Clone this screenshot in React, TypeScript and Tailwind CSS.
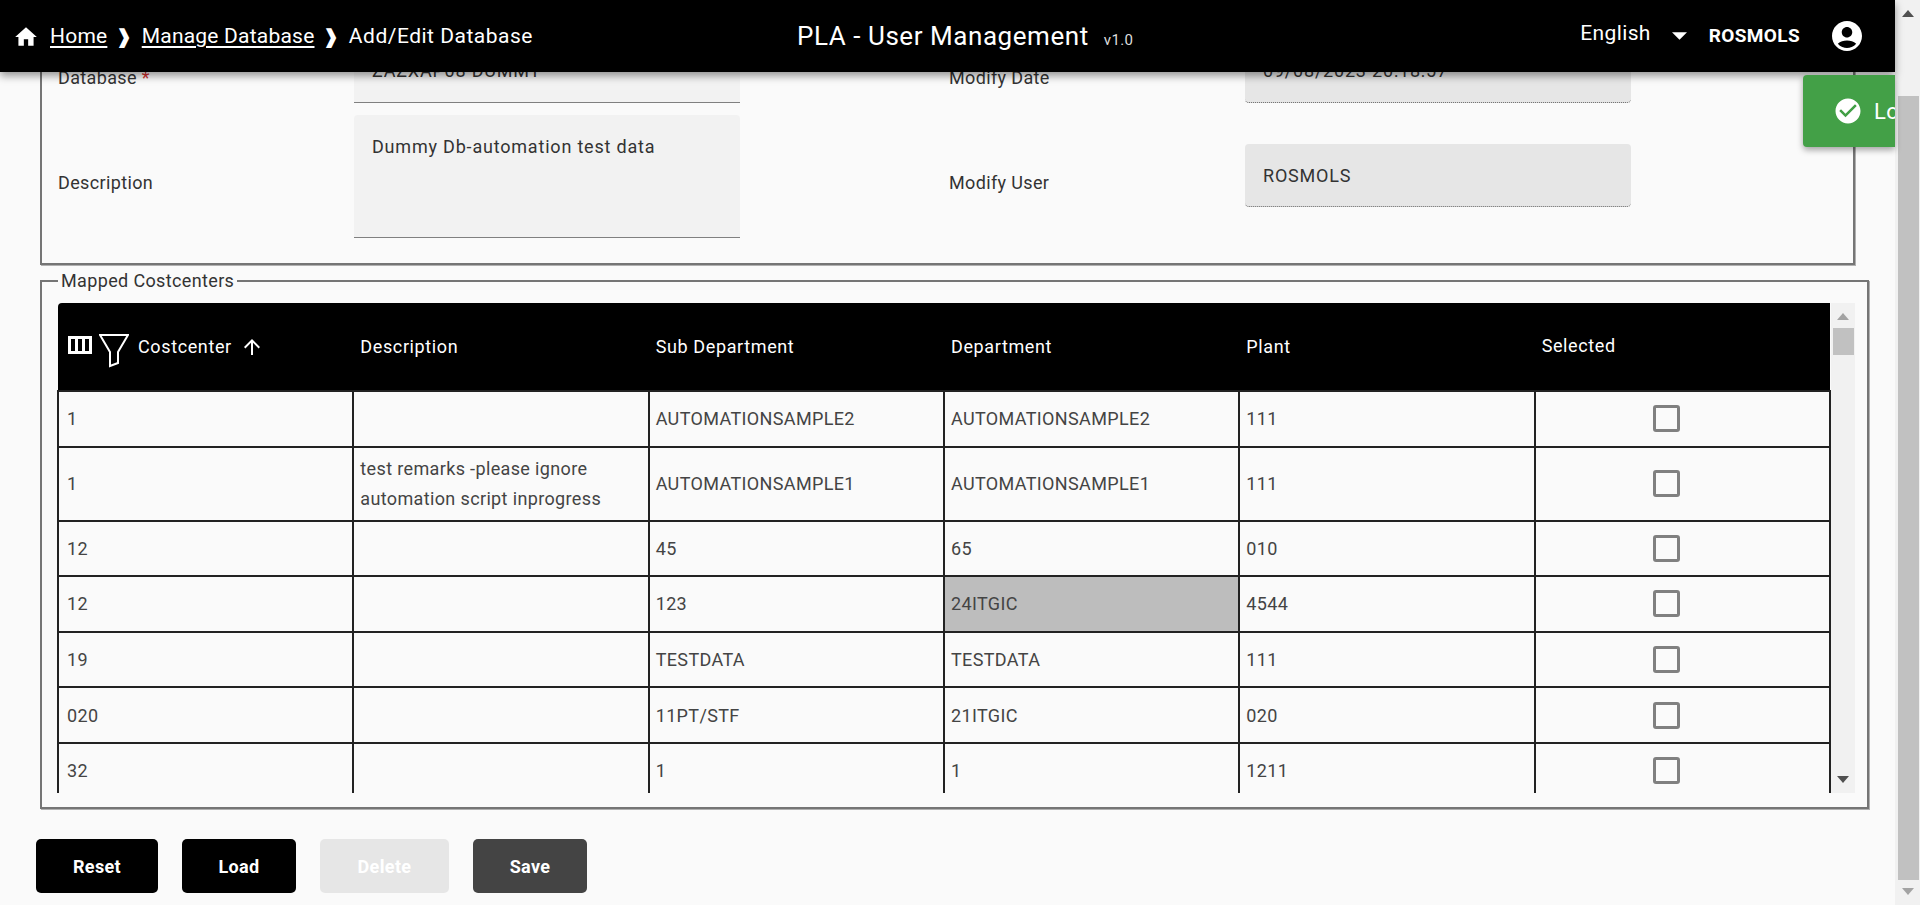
type Row = {
  code: string;
  description?: string[];
  sub: string;
  dept: string;
  plant: string;
  highlight?: boolean;
  tall?: boolean;
};

const rows: Row[] = [
  { code: "1", sub: "AUTOMATIONSAMPLE2", dept: "AUTOMATIONSAMPLE2", plant: "111" },
  {
    code: "1",
    description: ["test remarks -please ignore", "automation script inprogress"],
    sub: "AUTOMATIONSAMPLE1",
    dept: "AUTOMATIONSAMPLE1",
    plant: "111",
    tall: true,
  },
  { code: "12", sub: "45", dept: "65", plant: "010" },
  { code: "12", sub: "123", dept: "24ITGIC", plant: "4544", highlight: true },
  { code: "19", sub: "TESTDATA", dept: "TESTDATA", plant: "111" },
  { code: "020", sub: "11PT/STF", dept: "21ITGIC", plant: "020" },
  { code: "32", sub: "1", dept: "1", plant: "1211" },
];

const Arrow = ({ up, className }: { up?: boolean; className: string }) => (
  <svg width="12" height="7" viewBox="0 0 12 7" className={className}>
    <path d={up ? "M0 7 L6 0 L12 7 Z" : "M0 0 L12 0 L6 7 Z"} fill="currentColor" />
  </svg>
);

const Cell = ({ children, className = "" }: { children?: React.ReactNode; className?: string }) => (
  <td className={`border-2 border-[#222] px-[6px] py-0 align-middle text-[#444] ${className}`}>{children}</td>
);

const App = () => {
  return (
    <div className="flex h-[905px] w-full overflow-hidden bg-[#fafafa] text-[18px] tracking-[0.02em] text-[#333] [font-family:Roboto,sans-serif]">
      <div className="relative flex min-w-0 flex-1 flex-col">
        <header className="relative z-10 flex h-[72px] shrink-0 items-center bg-black pl-[14px] pr-[30px] text-white shadow-[0_4px_8px_rgba(0,0,0,0.4)]">
          <div className="flex w-[783px] items-center pt-[2px] text-[21px]">
            <svg width="26" height="26" viewBox="0 0 24 24" fill="currentColor" className="mr-[11px] -ml-px">
              <path d="M10 20v-6h4v6h5v-8h3L12 3 2 12h3v8z" />
            </svg>
            <span className="tracking-[0.01em] underline underline-offset-[3px]">Home</span>
            <span className="mx-[9px] text-[19px] font-bold">❱</span>
            <span className="tracking-[0.01em] underline underline-offset-[3px]">Manage Database</span>
            <span className="mx-[9px] text-[19px] font-bold">❱</span>
            <span className="tracking-[0.5px]">Add/Edit Database</span>
          </div>
          <div className="flex flex-1 items-baseline">
            <span className="text-[26px] tracking-[0.55px]">PLA - User Management</span>
            <span className="ml-[15px] text-[15px] text-[#ddd]">v1.0</span>
          </div>
          <div className="flex items-center">
            <span className="-mt-[4px] text-[21px]">English</span>
            <svg width="15" height="8" viewBox="0 0 16 8" className="ml-[21px]">
              <path d="M0 0 L16 0 L8 8 Z" fill="white" />
            </svg>
            <span className="ml-[22px] text-[19px] font-bold">ROSMOLS</span>
            <svg width="36" height="36" viewBox="0 0 24 24" fill="white" className="ml-[29px]">
              <path d="M12 2C6.48 2 2 6.48 2 12s4.48 10 10 10 10-4.48 10-10S17.52 2 12 2zm0 4c1.93 0 3.5 1.57 3.5 3.5S13.93 13 12 13s-3.5-1.57-3.5-3.5S10.07 6 12 6zm0 14c-2.03 0-4.43-.82-6.14-2.88C7.55 15.8 9.68 15 12 15s4.45.8 6.14 2.12C16.43 19.18 14.03 20 12 20z" />
            </svg>
          </div>
        </header>

        <div className="absolute right-0 top-[75px] z-20 flex h-[72px] w-[92px] items-center overflow-hidden rounded-l-[4px] bg-[#43a047] pl-[30px] text-white shadow-[0_3px_6px_rgba(0,0,0,0.35)]">
          <svg width="30" height="30" viewBox="0 0 24 24" fill="white" className="shrink-0">
            <path d="M12 2C6.48 2 2 6.48 2 12s4.48 10 10 10 10-4.48 10-10S17.52 2 12 2zm-2 15l-5-5 1.41-1.41L10 14.17l7.59-7.59L19 8l-9 9z" />
          </svg>
          <span className="ml-[11px] whitespace-nowrap text-[22px]">Lo</span>
        </div>

        <main className="flex flex-1 flex-col pl-[40px] pr-[26px]">
          <section className="-mt-[34px] mr-[14px] h-[227px] shrink-0 border-2 border-[#757575] pl-[16px] pr-[222px] shadow-[1px_1px_0_#b0b0b0]">
            <div className="grid grid-cols-[1fr_1fr]">
              <div className="flex flex-col">
                <div className="flex h-[62px] items-center">
                  <span className="w-[296px] pt-[12px]">
                    Database <span className="text-[#d32f2f]">*</span>
                  </span>
                  <div className="flex h-[63px] w-[386px] items-start border-b border-[#808080] bg-[#f2f2f2] px-[18px] pt-[17px] tracking-[0.8px]">
                    ZAZXAP08 DUMMY
                  </div>
                </div>
                <div className="mt-[13px] flex h-[123px] items-center">
                  <span className="w-[296px] pt-[12px]">Description</span>
                  <div className="h-full w-[386px] rounded-t-[4px] border-b border-[#808080] bg-[#f2f2f2] px-[18px] pt-[18px] tracking-[0.8px]">
                    Dummy Db-automation test data
                  </div>
                </div>
              </div>
              <div className="flex flex-col pl-[205px]">
                <div className="flex h-[62px] items-center">
                  <span className="w-[296px] pt-[12px]">Modify Date</span>
                  <div className="flex h-[63px] w-[386px] items-start rounded-b-[4px] border-b border-dotted border-[#666] bg-[#e6e6e6] px-[18px] pt-[17px] tracking-[0.8px]">
                    09/08/2023 20:18:57
                  </div>
                </div>
                <div className="mt-[42px] flex h-[63px] items-center">
                  <span className="w-[296px] pt-[13px]">Modify User</span>
                  <div className="flex h-full w-[386px] items-center rounded-[4px] border-b border-dotted border-[#666] bg-[#e6e6e6] px-[18px] tracking-[0.8px]">
                    ROSMOLS
                  </div>
                </div>
              </div>
            </div>
          </section>

          <fieldset className="mt-[8px] h-[536px] shrink-0 border-2 border-[#757575] pl-[15px] pr-[12px] pt-[14px] shadow-[1px_1px_0_#b0b0b0]">
            <legend className="ml-[1px] px-[3px] text-[18px] leading-[16px]">Mapped Costcenters</legend>
            <div className="flex h-[490px]">
              <div className="h-full min-w-0 flex-1 overflow-hidden">
                <table className="w-full table-fixed border-collapse">
                  <thead>
                    <tr className="h-[88px] border-b-2 border-b-white bg-black text-left tracking-[0.62px] text-white">
                      <th className="rounded-tl-[4px] pl-[10px] font-normal">
                        <div className="flex items-center">
                          <svg width="24" height="18" viewBox="0 0 24 18" className="-mt-[4px]">
                            <path d="M1.5 1.5h21v15h-21z M8.5 1.5v15 M15.5 1.5v15" fill="none" stroke="white" strokeWidth="3" />
                          </svg>
                          <svg width="30" height="34" viewBox="0 0 30 34" className="ml-[7px] mt-[8px]">
                            <path d="M1 1h28L19 18v11l-8 3V18z" fill="none" stroke="white" strokeWidth="2" />
                          </svg>
                          <span className="ml-[9px]">Costcenter</span>
                          <svg width="24" height="24" viewBox="0 0 24 24" fill="white" className="ml-[8px]">
                            <path d="M4 12l1.41 1.41L11 7.83V20h2V7.83l5.58 5.59L20 12l-8-8-8 8z" />
                          </svg>
                        </div>
                      </th>
                      <th className="pl-[7px] font-normal">Description</th>
                      <th className="pl-[7px] font-normal">Sub Department</th>
                      <th className="pl-[7px] font-normal">Department</th>
                      <th className="pl-[7px] font-normal">Plant</th>
                      <th className="pb-[2px] pl-[7px] font-normal">Selected</th>
                    </tr>
                  </thead>
                  <tbody>
                    {rows.map((row, i) => (
                      <tr key={i} className={row.tall ? "h-[74px]" : "h-[55.6px]"}>
                        <Cell className="pl-[8px]">{row.code}</Cell>
                        <Cell>
                          {row.description?.map((line) => (
                            <div key={line} className="leading-[30px]">
                              {line}
                            </div>
                          ))}
                        </Cell>
                        <Cell>{row.sub}</Cell>
                        <Cell className={row.highlight ? "bg-[#bdbdbd]" : ""}>{row.dept}</Cell>
                        <Cell>{row.plant}</Cell>
                        <Cell>
                          <div className="ml-[111px] h-[27px] w-[27px] rounded-[3px] border-[3px] border-[#808080]" />
                        </Cell>
                      </tr>
                    ))}
                  </tbody>
                </table>
              </div>
              <div className="flex w-[24px] shrink-0 flex-col items-center justify-between bg-[#f1f1f1] pb-[10px] pt-[10px]">
                <Arrow up className="text-[#a3a3a3]" />
                <div className="mb-auto mt-[8px] h-[27px] w-[21px] bg-[#c1c1c1]" />
                <Arrow className="text-[#505050]" />
              </div>
            </div>
          </fieldset>

          <div className="-ml-[4px] mt-[30px] flex gap-[24px] text-[18px] font-bold text-white">
            <button className="h-[54px] w-[122px] rounded-[5px] bg-black">Reset</button>
            <button className="h-[54px] w-[114px] rounded-[5px] bg-black">Load</button>
            <button className="h-[54px] w-[129px] rounded-[5px] bg-[#e6e6e6]">Delete</button>
            <button className="h-[54px] w-[114px] rounded-[5px] bg-[#444]">Save</button>
          </div>
        </main>
      </div>

      <div className="flex w-[25px] shrink-0 flex-col items-center bg-[#f1f1f1] pt-[10px]">
        <Arrow up className="text-[#505050]" />
        <div className="ml-px mt-[79px] h-[784px] w-[21px] bg-[#c1c1c1]" />
        <Arrow className="mt-[8px] text-[#a3a3a3]" />
      </div>
    </div>
  );
};

export default App;
